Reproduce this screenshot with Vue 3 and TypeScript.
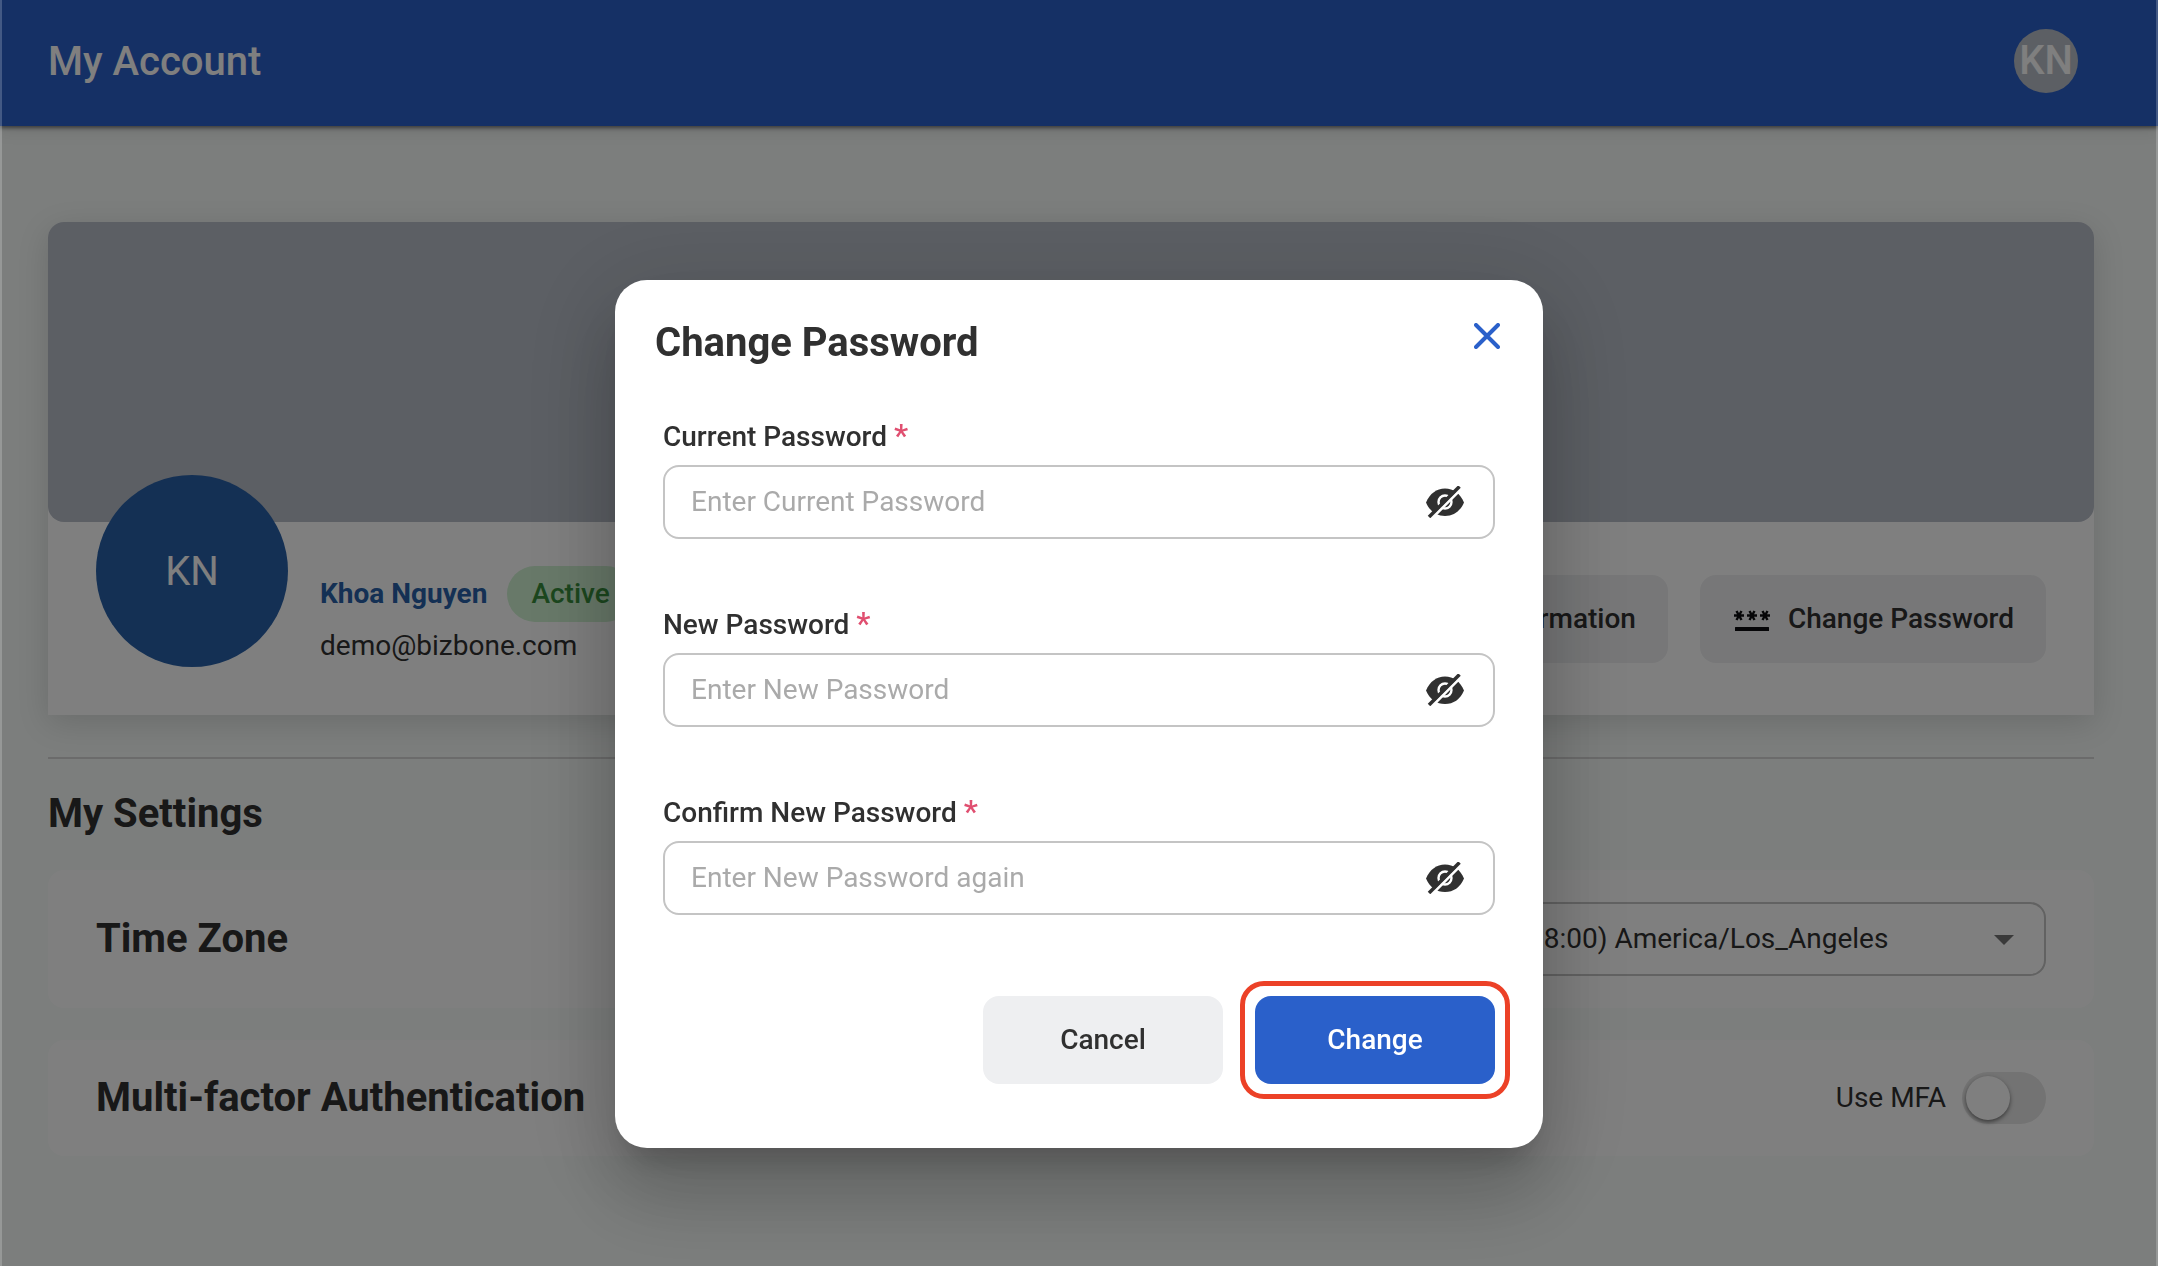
<script setup lang="ts">
import { ref } from 'vue'

interface PasswordField {
  id: string
  label: string
  placeholder: string
}

const fields: PasswordField[] = [
  { id: 'current', label: 'Current Password', placeholder: 'Enter Current Password' },
  { id: 'new', label: 'New Password', placeholder: 'Enter New Password' },
  { id: 'confirm', label: 'Confirm New Password', placeholder: 'Enter New Password again' },
]

const values = ref<Record<string, string>>({ current: '', new: '', confirm: '' })
const useMfa = ref(false)
const zone = ref('la')
</script>

<template>
  <div class="page">
    <header class="topbar">
      <h1>My Account</h1>
      <div class="mini-avatar">KN</div>
    </header>

    <main class="content">
      <section class="profile">
        <div class="banner"></div>
        <div class="profile-row">
          <div class="avatar">KN</div>
          <div class="identity">
            <div class="name-line">
              <span class="name">Khoa Nguyen</span>
              <span class="badge">Active</span>
            </div>
            <div class="email">demo@bizbone.com</div>
          </div>
          <div class="actions">
            <button type="button" class="btn soft">Edit Information</button>
            <button type="button" class="btn soft">
              <svg width="40" height="26" viewBox="0 0 40 26" aria-hidden="true">
                <g stroke="#0c0d10" stroke-width="2.4" fill="none">
                  <path d="M2 9.500h10M4.500 5l5 9M9.500 5l-5 9" />
                  <path d="M15 9.500h10M17.500 5l5 9M22.500 5l-5 9" />
                  <path d="M28 9.500h10M30.500 5l5 9M35.500 5l-5 9" />
                </g>
                <rect x="3" y="21" width="34" height="4" rx="0.500" fill="#0c0d10" />
              </svg>
              Change Password
            </button>
          </div>
        </div>
      </section>

      <section class="settings">
        <h2>My Settings</h2>
        <div class="row">
          <label for="zone" class="row-title">Time Zone</label>
          <div class="select-wrap">
            <select id="zone" v-model="zone">
              <option value="la">(GMT-08:00) America/Los_Angeles</option>
            </select>
            <svg class="caret" width="20" height="10" viewBox="0 0 20 10" aria-hidden="true">
              <path d="M0 0h20L10 10z" fill="#757575" />
            </svg>
          </div>
        </div>
        <div class="row">
          <span class="row-title">Multi-factor Authentication</span>
          <label class="mfa">
            Use MFA
            <input v-model="useMfa" type="checkbox" class="switch" />
          </label>
        </div>
      </section>
    </main>

    <div class="overlay">
      <form class="dialog" role="dialog" aria-labelledby="dialog-title" @submit.prevent>
        <div class="dialog-head">
          <h2 id="dialog-title">Change Password</h2>
          <button type="button" class="close" aria-label="Close">
            <svg width="26" height="26" viewBox="0 0 26 26" aria-hidden="true">
              <path d="M2 2l22 22M24 2L2 24" stroke="#2a60ca" stroke-width="4" stroke-linecap="round" />
            </svg>
          </button>
        </div>

        <div class="fields">
          <div v-for="field in fields" :key="field.id" class="field">
            <label :for="field.id">{{ field.label }} <span class="star">*</span></label>
            <div class="input-box">
              <input
                :id="field.id"
                v-model="values[field.id]"
                type="password"
                :placeholder="field.placeholder"
              />
              <button type="button" class="eye" aria-label="Show password">
                <svg width="38" height="32" viewBox="0 0 38 32" aria-hidden="true">
                  <path d="M0 16.500C4 7.500 10.500 2.500 19 2.500s15 5 19 14c-4 9-10.500 13.500-19 13.500S4 25.500 0 16.500z" fill="#303030" />
                  <circle cx="19" cy="16" r="6.500" fill="none" stroke="#fff" stroke-width="2.400" />
                  <path d="M5 33L36 2" stroke="#fff" stroke-width="3" />
                  <path d="M3 31L33.500 0.500" stroke="#303030" stroke-width="3.500" />
                </svg>
              </button>
            </div>
          </div>
        </div>

        <div class="dialog-actions">
          <button type="button" class="btn cancel">Cancel</button>
          <button type="submit" class="btn primary">Change</button>
        </div>
      </form>
    </div>
  </div>
</template>

<style>
body {
  margin: 0;
  background: #fff;
}
</style>

<style scoped>
* {
  box-sizing: border-box;
}

.page {
  min-height: 100vh;
  color: #303030;
  font: 400 28px/40px Roboto, sans-serif;
}

h1,
h2 {
  margin: 0;
  font-size: 40px;
  line-height: 48px;
}

button,
input,
select {
  font: inherit;
  color: inherit;
}

button {
  cursor: pointer;
}

.topbar {
  position: relative;
  display: flex;
  align-items: center;
  justify-content: space-between;
  height: 126px;
  padding: 0 80px 4px 48px;
  background: #2a60ca;
  color: #fff;
  box-shadow:
    0 2px 4px rgba(0, 0, 0, 0.5),
    0 4px 16px rgba(0, 0, 0, 0.1);
}

.topbar h1 {
  padding-top: 2px;
  font-weight: 500;
}

.mini-avatar {
  display: flex;
  align-items: center;
  justify-content: center;
  width: 64px;
  height: 64px;
  border-radius: 50%;
  background: #b8bec8;
  font-size: 40px;
  font-weight: 500;
}

.content {
  min-height: calc(100vh - 126px);
  padding: 96px 64px 112px 48px;
  background: #f8fcfa;
}

.profile {
  border-radius: 16px 16px 0 0;
  background: #fff;
  box-shadow: 0 8px 32px rgba(0, 0, 0, 0.14);
}

.banner {
  height: 300px;
  border-radius: 16px;
  background: #b8bec8;
}

.profile-row {
  display: flex;
  align-items: center;
  height: 193px;
  padding: 0 48px;
}

.avatar {
  display: flex;
  flex: none;
  align-items: center;
  justify-content: center;
  width: 192px;
  height: 192px;
  margin-top: -96px;
  padding-top: 2px;
  border-radius: 50%;
  background: #2860a8;
  color: #fff;
  font-size: 40px;
}

.identity {
  margin-left: 32px;
  padding-bottom: 6px;
}

.name-line {
  display: flex;
  align-items: center;
  gap: 20px;
}

.name {
  color: #2860a8;
  font-weight: 700;
}

.badge {
  padding: 8px 24px;
  border-radius: 28px;
  background: #d0f2d2;
  color: #388e3c;
  font-weight: 500;
}

.email {
  margin-top: 4px;
}

.actions {
  display: flex;
  gap: 32px;
  margin-left: auto;
}

.btn {
  display: flex;
  align-items: center;
  justify-content: center;
  gap: 16px;
  height: 88px;
  padding: 0 32px;
  border: 0;
  border-radius: 16px;
  background: #eeeff1;
  font-weight: 500;
}

.settings {
  display: flex;
  flex-direction: column;
  gap: 32px;
  margin-top: 42px;
  border-top: 2px solid #d6d6d6;
}

.settings h2 {
  margin-top: 31px;
}

.row {
  display: flex;
  align-items: center;
  justify-content: space-between;
  padding: 32px 48px;
  border-radius: 16px;
  background: #fff;
}

.row-title {
  font-size: 40px;
  font-weight: 700;
  line-height: 48px;
}

.select-wrap {
  position: relative;
}

select {
  appearance: none;
  display: block;
  width: 620px;
  height: 74px;
  padding: 0 96px 0 26px;
  border: 2px solid #c4c4c4;
  border-radius: 16px;
  background: #fff;
}

.caret {
  position: absolute;
  top: 33px;
  right: 32px;
  pointer-events: none;
}

.mfa {
  display: flex;
  align-items: center;
  gap: 16px;
}

.switch {
  appearance: none;
  width: 84px;
  height: 52px;
  margin: 0;
  padding: 4px;
  border-radius: 26px;
  background: #e6e6e6;
}

.switch::before {
  display: block;
  width: 44px;
  height: 44px;
  border-radius: 50%;
  background: #fff;
  box-shadow: 0 2px 4px rgba(0, 0, 0, 0.5);
  content: '';
}

.switch:checked::before {
  margin-left: auto;
}

.overlay {
  position: fixed;
  inset: 0;
  display: flex;
  align-items: flex-start;
  justify-content: center;
  padding-top: 280px;
  border: solid rgba(255, 255, 255, 0.2);
  border-width: 0 2px;
  background: rgba(0, 0, 0, 0.5);
}

.dialog {
  width: 928px;
  padding: 36px 40px 64px;
  border-radius: 32px;
  background: #fff;
  box-shadow:
    0 22px 30px -14px rgba(0, 0, 0, 0.2),
    0 48px 76px 6px rgba(0, 0, 0, 0.14),
    0 18px 92px 16px rgba(0, 0, 0, 0.12);
}

.dialog-head {
  display: flex;
  align-items: flex-start;
  justify-content: space-between;
}

.dialog-head h2 {
  margin-top: 3px;
  font-weight: 700;
}

.close {
  display: flex;
  padding: 7px 3px;
  border: 0;
  background: none;
}

.fields {
  display: flex;
  flex-direction: column;
  gap: 66px;
  margin-top: 50px;
  padding: 0 8px;
}

.field {
  display: flex;
  flex-direction: column;
  gap: 8px;
}

.field label {
  font-weight: 500;
}

.star {
  color: #e04f70;
  font-size: 32px;
  line-height: 32px;
}

.input-box {
  display: flex;
  align-items: center;
  height: 74px;
  padding: 0 29px 0 26px;
  border: 2px solid #c4c4c4;
  border-radius: 16px;
}

.input-box input {
  flex: 1;
  min-width: 0;
  height: 40px;
  padding: 0;
  border: 0;
  outline: 0;
  background: none;
}

.input-box input::placeholder {
  color: #aaa;
}

.eye {
  display: flex;
  padding: 0;
  border: 0;
  background: none;
}

.dialog-actions {
  display: flex;
  gap: 32px;
  justify-content: flex-end;
  margin-top: 81px;
  padding: 0 8px;
}

.dialog-actions .btn {
  width: 240px;
}

.dialog-actions .primary {
  position: relative;
  background: #2a60ca;
  color: #fff;
}

.primary::after {
  position: absolute;
  inset: -15px;
  border: 5px solid #ec4127;
  border-radius: 24px;
  content: '';
}
</style>
